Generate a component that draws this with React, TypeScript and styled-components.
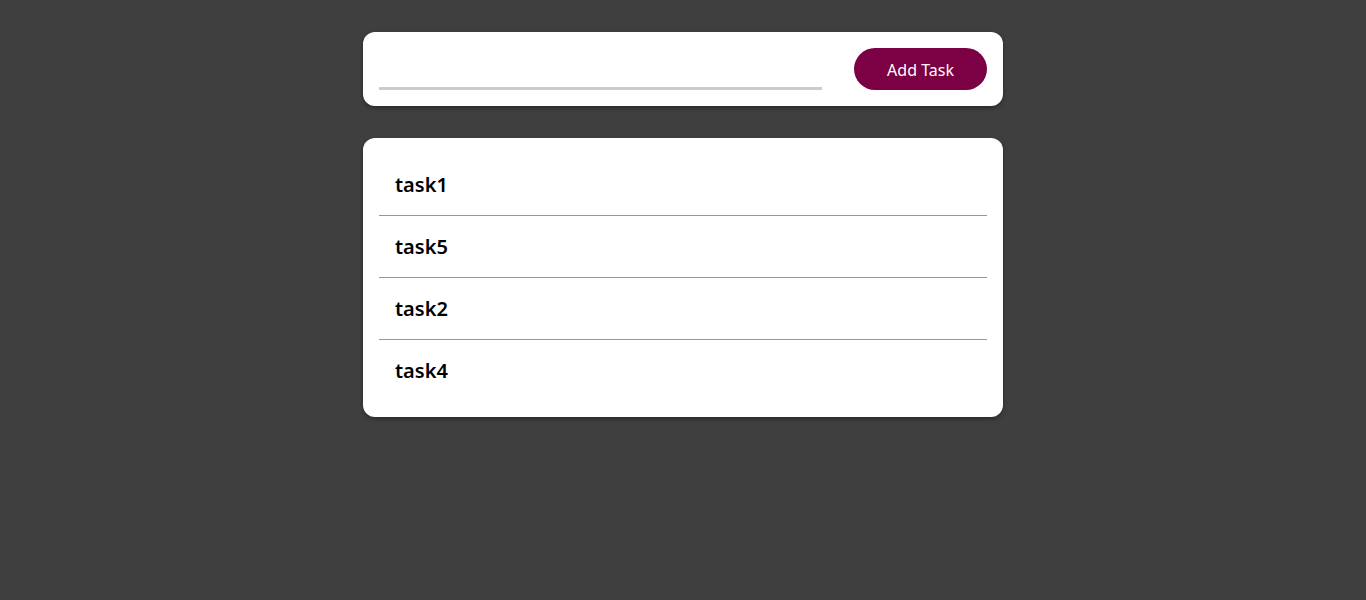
import React from "react";
import styled, { createGlobalStyle } from "styled-components";

const GlobalStyle = createGlobalStyle`
  html, body {
    margin: 0;
    padding: 0;
    background: #3f3f3f;
    font-family: "Noto Sans", "Open Sans", sans-serif;
  }
`;

const Page = styled.main`
  display: flex;
  flex-direction: column;
  align-items: center;
  gap: 32px;
  padding-top: 32px;
  min-height: 600px;
  box-sizing: border-box;
`;

const Card = styled.section`
  width: 640px;
  box-sizing: border-box;
  background: #ffffff;
  border-radius: 12px;
  box-shadow: 0 2px 4px rgba(0, 0, 0, 0.35);
  padding: 16px;
`;

const FormCard = styled(Card)`
  display: flex;
  align-items: center;
  gap: 32px;
  height: 74px;
`;

const TaskInput = styled.input`
  flex: 1;
  align-self: flex-end;
  border: none;
  border-bottom: 3px solid #cccccc;
  outline: none;
  height: 36px;
  box-sizing: border-box;
  padding: 0;
  font-family: inherit;
  font-size: 16px;
  background: transparent;
`;

const AddButton = styled.button`
  width: 133px;
  height: 42px;
  border: none;
  border-radius: 21px;
  background: #7b0044;
  color: #ffffff;
  font-family: inherit;
  font-size: 16px;
  padding: 2px 0 0;
  cursor: pointer;
`;

const List = styled.ul`
  list-style: none;
  margin: 0;
  padding: 0;
`;

const Item = styled.li`
  height: 61px;
  display: flex;
  align-items: center;
  padding: 0 16px;
  font-size: 20px;
  font-weight: 600;
  color: #000000;
  border-bottom: 1px solid #cd8080;
  &:last-child {
    border-bottom: none;
  }
`;

const tasks = ["task1", "task5", "task2", "task4"];

export default function App() {
  return (
    <>
      <GlobalStyle />
      <Page>
        <FormCard>
          <TaskInput type="text" />
          <AddButton>Add Task</AddButton>
        </FormCard>
        <Card>
          <List>
            {tasks.map((t) => (
              <Item key={t}>{t}</Item>
            ))}
          </List>
        </Card>
      </Page>
    </>
  );
}
